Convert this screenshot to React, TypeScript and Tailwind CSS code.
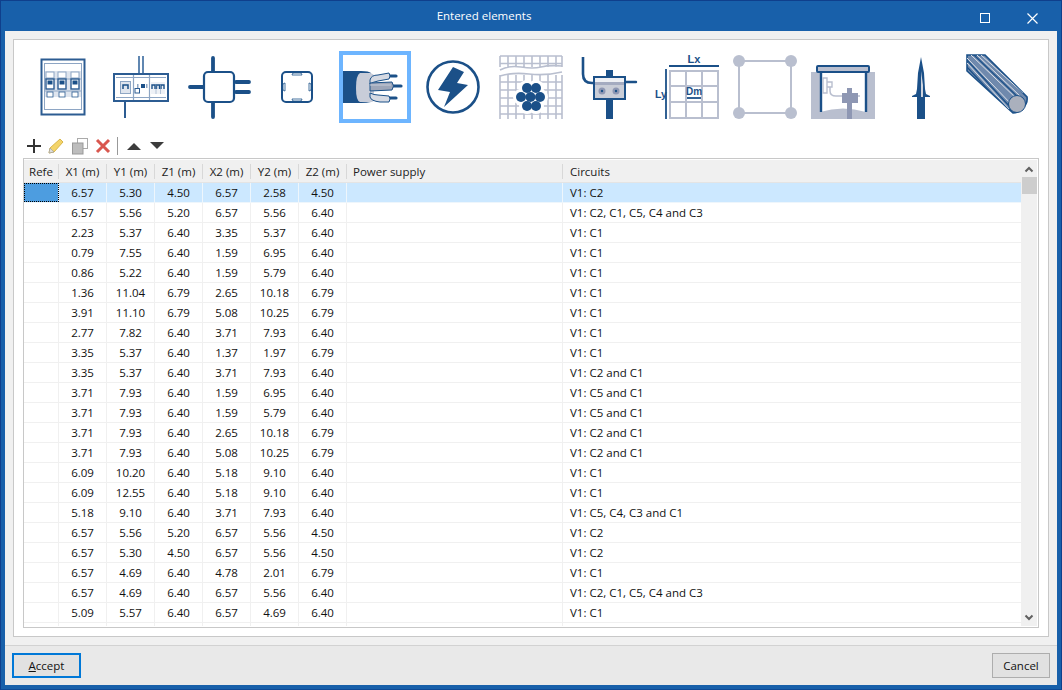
const C = "#1b5088";
const M = "#8ea6c4";
const G = "#b9bfcf";

function Ico({ children }: { children: React.ReactNode }) {
  return <svg width="64" height="64" viewBox="0 0 64 64" fill="none" className="overflow-visible">{children}</svg>;
}

function I1() {
  return <Ico>
    <rect x="10.500" y="4.500" width="43" height="55" stroke="#2c5c92" strokeWidth="2" />
    <rect x="13.500" y="8.500" width="37" height="46" stroke={M} strokeWidth="1" />
    <rect x="14" y="16" width="36" height="26" fill="#dfe5ee" />
    <path d="M14 24h36M14 36h36" stroke={M} />
    {[15, 27, 40].map(x => <g key={x}>
      <rect x={x} y="17" width="8" height="6" fill="#fff" stroke={M} />
      <rect x={x} y="24" width="8" height="10" fill="#fff" stroke="#2c5c92" strokeWidth="1.400" />
      <rect x={x + 1.500} y="25.500" width="5" height="4" fill={C} />
      <rect x={x + 1} y="37" width="6" height="5" fill="#fff" stroke="#2c5c92" strokeWidth=".8" />
    </g>)}
  </Ico>;
}
function I2() {
  return <Ico>
    <path d="M30 1v17M34 1v17" stroke="#3a6a9e" strokeWidth="1.600" />
    <path d="M16 46v17" stroke="#2c5c92" strokeWidth="2" />
    <rect x="5" y="19" width="54" height="27" fill="#fff" stroke="#2c5c92" strokeWidth="2" />
    <path d="M7 22.500h50M7 42.500h50M24.500 20v25M40.500 20v25" stroke={M} strokeWidth="1.200" />
    <rect x="11.500" y="26.500" width="10" height="12" fill="#dfe5ee" stroke={M} />
    <path d="M14 34v-4h5v4" stroke={C} strokeWidth="1.500" />
    <rect x="26" y="33.500" width="4.500" height="4.500" fill="#fff" stroke="#2c5c92" />
    <rect x="28" y="29" width="1.500" height="4" fill={M} />
    <rect x="32" y="29" width="4" height="4" fill={C} />
    <rect x="37" y="29" width="1.500" height="4" fill={M} />
    <rect x="42" y="27" width="14" height="12" fill="#eef1f6" />
    <path d="M43 34v-4h3v4M47.500 34v-4h3v4M52 34v-4h3v4" stroke={C} strokeWidth="1.400" />
    <path d="M47 30v9M51.500 30v9" stroke={M} strokeWidth=".6" />
  </Ico>;
}
function I3() {
  return <Ico>
    <path d="M26 3v13M26 48v14M3 32h13M49 27h13M49 37h13" stroke={C} strokeWidth="3.800" strokeLinecap="round" />
    <rect x="17" y="17" width="30" height="30" rx="4" fill="#fff" stroke={C} strokeWidth="2.200" />
  </Ico>;
}
function I4() {
  return <Ico>
    <rect x="17" y="17" width="30" height="30" rx="4" fill="#fff" stroke={C} strokeWidth="2" />
    <path d="M27 20q0-2 2-2h6q2 0 2 2zM27 44q0 2 2 2h6q2 0 2-2zM20 28q-2 0-2 2v4q0 2 2 2zM44 28q2 0 2 2v4q0 2-2 2z" fill="#fff" stroke={C} strokeWidth=".8" />
  </Ico>;
}
function I5() {
  return <Ico>
    <path d="M47 21h6M50 31h8M46 43h7" stroke={C} strokeWidth="3.200" strokeLinecap="round" />
    <path d="M0 16h18q8 0 10 2v29q-4 1-10 1H0z" fill={C} />
    <path d="M17 18h10q4 1 4 3v24q0 2-4 2H17q-4-1-4-14t4-15z" fill="#c8cdd9" />
    <path d="M27 25q1-5 8-5l11-2q2 3 0 6l-11 2q-5 1-8 3z" fill="#d6dae3" stroke={C} strokeWidth="1" />
    <path d="M27 38q4 2 8 2l11 1q2 3 0 6h-9q-9-1-10-5z" fill="#d6dae3" stroke={C} strokeWidth="1" />
    <path d="M27 28l22-1q3 4 0 8l-22 1z" fill="#9da6b9" stroke={C} strokeWidth="1" />
    <path d="M27 30h21" stroke="#c8cdd9" strokeWidth="1" />
  </Ico>;
}
function I6() {
  return <Ico>
    <circle cx="32" cy="32" r="25.500" fill="#fff" stroke={C} strokeWidth="2.600" />
    <path d="M32 12l11 5-7 11 11 2-24 22 6-15-12-2z" fill={C} />
  </Ico>;
}
function I7() {
  const v = [1, 9, 17, 25, 33, 41, 49, 57, 63];
  const dots = [[28, 33], [37, 33], [22, 42], [31.500, 42], [41, 42], [28, 51], [37, 51]];
  return <Ico>
    <path d={"M1 1H63M1 8.500H63" + v.map(x => `M${x} 1V12`).join("") + "M1 15Q10 10 22 12T42 12T63 11"} stroke={G} strokeWidth="1.600" />
    <path d="M1 21Q14 17 30 19T63 17" stroke={G} strokeWidth="1.600" />
    <path d={"M1 27H63M1 35H63M1 43H63M1 51H63M1 59H63" + v.map(x => `M${x} 20V64`).join("")} stroke={G} strokeWidth="1.600" />
    {dots.map(([x, y]) => <circle key={x * y} cx={x} cy={y} r="8" fill="#fff" />)}
    {dots.map(([x, y]) => <circle key={x * y} cx={x} cy={y} r="5" fill={C} />)}
  </Ico>;
}
function I8() {
  return <Ico>
    <path d="M6 2v17q0 9 9 9h2" stroke={C} strokeWidth="2.600" />
    <path d="M48 27h11" stroke={C} strokeWidth="2.400" strokeLinecap="round" />
    <rect x="29" y="15" width="7" height="8" fill={C} />
    <rect x="29" y="44" width="7" height="20" fill={C} />
    <rect x="17" y="22" width="31" height="22" fill="#c9cdd7" stroke={C} strokeWidth="2" />
    <rect x="18" y="23" width="29" height="4" fill="#eef0f4" />
    <rect x="18" y="27" width="29" height="3" fill="#a4abc0" />
    <circle cx="25" cy="36" r="3.500" fill="#8e97b3" />
    <circle cx="39" cy="36" r="3.500" fill="#8e97b3" />
    <circle cx="25" cy="36" r="1.200" fill={C} />
    <circle cx="39" cy="36" r="1.200" fill={C} />
  </Ico>;
}
function I9() {
  const f = "Liberation Sans, sans-serif";
  return <Ico>
    <path d="M14 11h50" stroke={C} strokeWidth="1.800" />
    <path d="M11 14v50" stroke={C} strokeWidth="1.800" />
    <text x="39" y="8" textAnchor="middle" fontSize="11" fontWeight="700" fill={C} fontFamily={f}>Lx</text>
    <text x="0" y="43" fontSize="10.500" fontWeight="700" fill={C} fontFamily={f}>Ly</text>
    <rect x="15" y="16" width="48" height="47" stroke={G} strokeWidth="2" />
    <path d="M31 16v47M47 16v47M15 31h48M15 47h48" stroke={G} strokeWidth="2" />
    <text x="39" y="40" textAnchor="middle" fontSize="10" fontWeight="700" fill={C} fontFamily={f}>Dm</text>
    <path d="M32 43h14" stroke={C} strokeWidth="1.800" />
  </Ico>;
}
function I10() {
  return <Ico>
    <rect x="6" y="6" width="52" height="52" stroke={G} strokeWidth="2" />
    {[[6, 6], [58, 6], [6, 58], [58, 58]].map(([x, y]) => <circle key={x * 100 + y} cx={x} cy={y} r="6" fill={G} />)}
  </Ico>;
}
function I11() {
  return <Ico>
    <path d="M0 17h64v47H0z" fill="#b9bfcf" />
    <path d="M9 17h46v40q-23-7-46 0z" fill="#fff" />
    <rect x="6" y="11" width="52" height="6" rx="1" fill="#b9bfcf" stroke={C} strokeWidth="2" />
    <path d="M10 17v40M55 17v40" stroke={C} strokeWidth="2.400" />
    <path d="M12 23h4v15h-4zM16 27h5v5h-5z" fill="#fff" stroke={G} strokeWidth="1.400" />
    <path d="M19 32v4q0 5 6 5h24" stroke={G} strokeWidth="1.500" />
    <rect x="31" y="38" width="16" height="10" fill="#8e97b3" />
    <rect x="36" y="33" width="5" height="31" fill="#8e97b3" />
  </Ico>;
}
function I12() {
  return <Ico>
    <path d="M32 2l3 16 1 16 1 5 4 2v1h-5v22h-8V42h-5v-1l4-2 1-5 1-16z" fill={C} />
    <path d="M32 16l2 14v12h-2z" fill="#d0d5df" />
  </Ico>;
}
function I13() {
  return <Ico>
    <clipPath id="cable"><path d="M0 0h18l42 42q1 6-4 11t-10 5L0 16z" /></clipPath>
    <path d="M0 0h18l42 42q1 6-4 11t-10 5L0 16z" fill="#6f89ad" stroke={C} strokeWidth="1.600" />
    <g clipPath="url(#cable)">
      <path d="M0 3l46 48M4 0l47 45M10 0l44 42M0 8l42 46M14 0l42 38" stroke="#dfe3ea" strokeWidth="1" />
      <path d="M0 5l44 48M7 0l46 44M0 12l40 43" stroke={C} strokeWidth="1.200" />
    </g>
    <circle cx="50" cy="49" r="8.500" fill="#aab0bd" stroke={C} strokeWidth="1" />
  </Ico>;
}

const icons = [I1, I2, I3, I4, I5, I6, I7, I8, I9, I10, I11, I12, I13];

const rows = [
  ["6.57", "5.30", "4.50", "6.57", "2.58", "4.50", "V1: C2"],
  ["6.57", "5.56", "5.20", "6.57", "5.56", "6.40", "V1: C2, C1, C5, C4 and C3"],
  ["2.23", "5.37", "6.40", "3.35", "5.37", "6.40", "V1: C1"],
  ["0.79", "7.55", "6.40", "1.59", "6.95", "6.40", "V1: C1"],
  ["0.86", "5.22", "6.40", "1.59", "5.79", "6.40", "V1: C1"],
  ["1.36", "11.04", "6.79", "2.65", "10.18", "6.79", "V1: C1"],
  ["3.91", "11.10", "6.79", "5.08", "10.25", "6.79", "V1: C1"],
  ["2.77", "7.82", "6.40", "3.71", "7.93", "6.40", "V1: C1"],
  ["3.35", "5.37", "6.40", "1.37", "1.97", "6.79", "V1: C1"],
  ["3.35", "5.37", "6.40", "3.71", "7.93", "6.40", "V1: C2 and C1"],
  ["3.71", "7.93", "6.40", "1.59", "6.95", "6.40", "V1: C5 and C1"],
  ["3.71", "7.93", "6.40", "1.59", "5.79", "6.40", "V1: C5 and C1"],
  ["3.71", "7.93", "6.40", "2.65", "10.18", "6.79", "V1: C2 and C1"],
  ["3.71", "7.93", "6.40", "5.08", "10.25", "6.79", "V1: C2 and C1"],
  ["6.09", "10.20", "6.40", "5.18", "9.10", "6.40", "V1: C1"],
  ["6.09", "12.55", "6.40", "5.18", "9.10", "6.40", "V1: C1"],
  ["5.18", "9.10", "6.40", "3.71", "7.93", "6.40", "V1: C5, C4, C3 and C1"],
  ["6.57", "5.56", "5.20", "6.57", "5.56", "4.50", "V1: C2"],
  ["6.57", "5.30", "4.50", "6.57", "5.56", "4.50", "V1: C2"],
  ["6.57", "4.69", "6.40", "4.78", "2.01", "6.79", "V1: C1"],
  ["6.57", "4.69", "6.40", "6.57", "5.56", "6.40", "V1: C2, C1, C5, C4 and C3"],
  ["5.09", "5.57", "6.40", "6.57", "4.69", "6.40", "V1: C1"],
  ["", "", "", "", "", "", ""],
];

const heads = ["X1 (m)", "Y1 (m)", "Z1 (m)", "X2 (m)", "Y2 (m)", "Z2 (m)"];

export default function App() {
  return (
    <div className="w-[1062px] h-[690px] overflow-hidden bg-[#1860aa] border border-[#0f3f8c] border-b-[#0f4a96] flex flex-col text-[11.5px] text-[#111] font-['Open_Sans',sans-serif]">
      <div className="h-[30px] shrink-0 relative flex items-center justify-center pr-[94px] text-white">
        <span>Entered elements</span>
        <div className="absolute left-[979px] top-[12px] w-[10px] h-[10px] border border-white" />
        <svg className="absolute left-[1026px] top-[12px]" width="11" height="11" viewBox="0 0 11 11"><path d="M.5.5l10 10M10.500.5l-10 10" stroke="#fff" strokeWidth="1.200" /></svg>
      </div>
      <div className="mx-[4px] mb-[4px] flex-1 min-h-0 bg-[#f0f0f0] flex flex-col">
        <div className="mx-[8px] mt-[8px] h-[598px] bg-white border border-[#c8c8c8] px-[9px] flex flex-col shrink-0">
          <div className="flex gap-[6px] pl-[4px] pt-[11px] h-[96px] shrink-0">
            {icons.map((Icon, i) => (
              <div key={i} className={"w-[72px] h-[72px] shrink-0 flex items-center justify-center " + (i === 4 ? "border-[4px] border-[#6db5ff]" : "")}>
                <Icon />
              </div>
            ))}
          </div>
          <div className="flex items-center h-[18px] mt-[1px] pl-[3px] shrink-0">
            <svg width="16" height="16" viewBox="0 0 16 16"><path d="M8 1v14M1 8h14" stroke="#333" strokeWidth="2" /></svg>
            <svg className="ml-[5px]" width="18" height="18" viewBox="0 0 18 18"><path d="M13 2l3 3L7 15l-5 1 1-5z" fill="#f3d46a" stroke="#d9b64a" /><path d="M3 11l4 4-5 1z" fill="#ddd" stroke="#999" strokeWidth=".6" /></svg>
            <svg className="ml-[6px]" width="18" height="18" viewBox="0 0 18 18"><rect x="6.500" y="1.500" width="10" height="10" fill="#fff" stroke="#aaa" /><rect x="1.500" y="6" width="10.500" height="11" fill="#bdbdbd" stroke="#999" /></svg>
            <svg className="ml-[6px]" width="16" height="16" viewBox="0 0 16 16"><path d="M2 2l12 12M14 2L2 14" stroke="#d9574f" strokeWidth="3" /></svg>
            <div className="w-px h-[18px] bg-[#999] ml-[6px]" />
            <svg className="ml-[8px]" width="16" height="10" viewBox="0 0 16 10"><path d="M8 2l7 7H1z" fill="#3c3c3c" /></svg>
            <svg className="ml-[7px]" width="16" height="10" viewBox="0 0 16 10"><path d="M1 1h14L8 8z" fill="#3c3c3c" /></svg>
          </div>
          <div className="mt-[3px] h-[470px] border border-[#c8c8c8] pt-[1px] pr-[1px] pb-[1px] flex overflow-hidden shrink-0">
            <div className="flex-1 min-w-0 flex flex-col overflow-hidden">
              <div className="flex h-[23px] bg-[#f0f0f0] shrink-0 border-b border-[#e4e4e4] items-center pt-[1px] text-[#222]">
                <div className="w-[35px] text-center border-r border-[#d8d8d8] h-[15px] leading-[15px] overflow-hidden">Refe</div>
                {heads.map(h => <div key={h} className="w-[48px] text-center border-r border-[#d8d8d8] h-[15px] leading-[15px]">{h}</div>)}
                <div className="w-[216px] pl-[6px] border-r border-[#d8d8d8] h-[15px] leading-[15px]">Power supply</div>
                <div className="flex-1 pl-[7px] h-[15px] leading-[15px]">Circuits</div>
              </div>
              {rows.map((r, i) => (
                <div key={i} className={"flex h-[20px] shrink-0 border-b leading-[19px] " + (i === 0 ? "bg-[#cce8ff] border-[#eef6fc]" : "border-[#f0f0f0]")}>
                  <div className={"w-[35px] border-r border-[#f0f0f0] " + (i === 0 ? "bg-[#4d9de0] outline-1 outline-dotted outline-black -outline-offset-1" : "")} />
                  {r.slice(0, 6).map((v, j) => <div key={j} className={"w-[48px] text-center border-r " + (i === 0 ? "border-[#eef6fc]" : "border-[#f0f0f0]")}>{v}</div>)}
                  <div className={"w-[216px] border-r " + (i === 0 ? "border-[#eef6fc]" : "border-[#f0f0f0]")} />
                  <div className="flex-1 pl-[7px]">{r[6]}</div>
                </div>
              ))}
            </div>
            <div className="w-[16px] shrink-0 bg-[#f0f0f0] flex flex-col items-center">
              <svg className="mt-[6px]" width="10" height="7" viewBox="0 0 10 7"><path d="M1.500 5.500L5 2l3.500 3.500" stroke="#606060" strokeWidth="2" fill="none" /></svg>
              <div className="w-[15px] h-[17px] bg-[#cdcdcd] mt-[4px]" />
              <svg className="mt-auto mb-[5px]" width="10" height="7" viewBox="0 0 10 7"><path d="M1.500 1.500L5 5l3.500-3.500" stroke="#606060" strokeWidth="2" fill="none" /></svg>
            </div>
          </div>
        </div>
        <div className="mt-[8px] border-t border-[#d2d2d2] flex-1 bg-[#e9e9e9] flex items-start justify-between pl-[7px] pr-[7px] pt-[7px]">
          <button className="w-[69px] h-[25px] bg-[#e1e1e1] border-2 border-[#0078d7] text-center"><span className="underline">A</span>ccept</button>
          <button className="w-[58px] h-[25px] bg-[#e1e1e1] border border-[#adadad] text-center">Cancel</button>
        </div>
      </div>
    </div>
  );
}
